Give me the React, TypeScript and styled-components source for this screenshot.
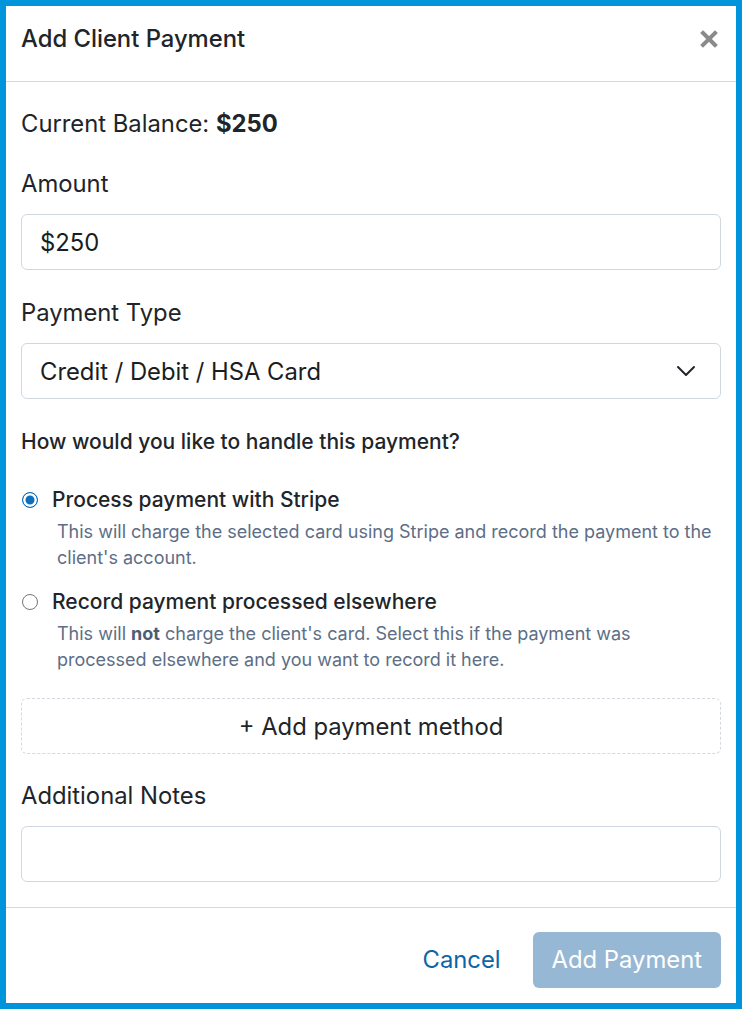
import React, { useState } from "react";
import styled, { createGlobalStyle } from "styled-components";

const GlobalStyle = createGlobalStyle`
  * { box-sizing: border-box; }
  html, body { margin: 0; padding: 0; background: #ffffff; }
  body { font-family: Inter, "Noto Sans", "Liberation Sans", sans-serif; color: #212529; }
`;

const App: React.FC = () => {
  const [mode, setMode] = useState<"stripe" | "elsewhere">("stripe");

  return (
    <>
      <GlobalStyle />
      <Modal>
        <Header>
          <Title>Add Client Payment</Title>
          <CloseButton aria-label="Close">
            <svg width="18" height="18" viewBox="0 0 18 18">
              <path d="M3 3 L15 15 M15 3 L3 15" stroke="#8a8a8a" strokeWidth="4" strokeLinecap="square" />
            </svg>
          </CloseButton>
        </Header>

        <Body>
          <Balance>
            Current Balance: <strong>$250</strong>
          </Balance>

          <Label gap={30}>Amount</Label>
          <Field>
            <FieldText>$250</FieldText>
          </Field>

          <Label gap={28}>Payment Type</Label>
          <Field>
            <FieldText>Credit / Debit / HSA Card</FieldText>
            <svg width="20" height="12" viewBox="0 0 20 12">
              <path d="M2 2 L10 10 L18 2" fill="none" stroke="#212529" strokeWidth="2" strokeLinecap="round" strokeLinejoin="round" />
            </svg>
          </Field>

          <Question>How would you like to handle this payment?</Question>

          <Option gap={32} onClick={() => setMode("stripe")}>
            <OptionRow>
              <Radio checked={mode === "stripe"} />
              <OptionLabel>Process payment with Stripe</OptionLabel>
            </OptionRow>
            <OptionHint>
              This will charge the selected card using Stripe and record the payment to the client's account.
            </OptionHint>
          </Option>

          <Option gap={18} onClick={() => setMode("elsewhere")}>
            <OptionRow>
              <Radio checked={mode === "elsewhere"} />
              <OptionLabel>Record payment processed elsewhere</OptionLabel>
            </OptionRow>
            <OptionHint>
              This will <b>not</b> charge the client's card. Select this if the payment was
              <br />
              processed elsewhere and you want to record it here.
            </OptionHint>
          </Option>

          <AddMethod>+ Add payment method</AddMethod>

          <Label gap={27}>Additional Notes</Label>
          <Field />
        </Body>

        <Footer>
          <CancelButton>Cancel</CancelButton>
          <SubmitButton disabled>Add Payment</SubmitButton>
        </Footer>
      </Modal>
    </>
  );
};

export default App;

const Modal = styled.div`
  display: flex;
  flex-direction: column;
  height: 100vh;
  border: 6px solid #0095da;
  background: #ffffff;
`;

const Header = styled.div`
  display: flex;
  align-items: center;
  justify-content: space-between;
  height: 76px;
  padding: 0 18px 0 15px;
  border-bottom: 1px solid #d3d9e0;
  flex-shrink: 0;
`;

const Title = styled.h1`
  margin: 0 0 10px;
  font-size: 23.8px;
  font-weight: 500;
  color: #212529;
`;

const CloseButton = styled.button`
  display: flex;
  border: none;
  background: none;
  padding: 0;
  margin-top: -9px;
  cursor: pointer;
`;

const Body = styled.div`
  display: flex;
  flex-direction: column;
  padding: 27px 15px 25px;
  border-bottom: 1px solid #d3d9e0;
`;

const Balance = styled.div`
  font-size: 23.8px;
  line-height: 30px;
  strong { font-weight: 700; }
`;

const Label = styled.label<{ gap: number }>`
  margin-top: ${(p) => p.gap}px;
  margin-bottom: 15px;
  font-size: 23.8px;
  line-height: 30px;
  color: #212529;
`;

const Field = styled.div`
  display: flex;
  align-items: center;
  justify-content: space-between;
  height: 56px;
  padding: 0 24px 0 18px;
  border: 1px solid #cfd7e0;
  border-radius: 6px;
  background: #ffffff;
`;

const FieldText = styled.span`
  font-size: 23.8px;
  color: #1a1d21;
`;

const Question = styled.div`
  margin-top: 30px;
  font-size: 21px;
  line-height: 26px;
  font-weight: 500;
  color: #212529;
`;

const Option = styled.div<{ gap: number }>`
  display: flex;
  flex-direction: column;
  margin-top: ${(p) => p.gap}px;
  cursor: pointer;
`;

const OptionRow = styled.div`
  display: flex;
  align-items: center;
  gap: 14px;
  padding-left: 1px;
`;

const Radio = styled.span<{ checked: boolean }>`
  width: 16px;
  height: 16px;
  border-radius: 50%;
  border: 1px solid ${(p) => (p.checked ? "#0d6ebd" : "#767676")};
  background: ${(p) => (p.checked ? "#0d6ebd" : "#ffffff")};
  box-shadow: ${(p) => (p.checked ? "inset 0 0 0 2.5px #ffffff" : "none")};
  flex-shrink: 0;
`;

const OptionLabel = styled.span`
  font-size: 21px;
  line-height: 26px;
  font-weight: 500;
  color: #212529;
`;

const OptionHint = styled.p`
  margin: 6px 0 0 36px;
  font-size: 18px;
  line-height: 26px;
  color: #5d6e86;
  b { font-weight: 700; color: #4d5d73; }
`;

const AddMethod = styled.div`
  display: flex;
  align-items: center;
  justify-content: center;
  height: 56px;
  margin-top: 25px;
  border: 1px dashed #d3d9e0;
  border-radius: 6px;
  font-size: 23.8px;
  color: #212529;
  cursor: pointer;
`;

const Footer = styled.div`
  display: flex;
  align-items: center;
  justify-content: flex-end;
  gap: 32px;
  flex: 1;
  padding: 8px 15px 0;
`;

const CancelButton = styled.button`
  border: none;
  background: none;
  padding: 0;
  font-family: inherit;
  font-size: 23.8px;
  color: #0b66a8;
  cursor: pointer;
`;

const SubmitButton = styled.button`
  height: 56px;
  padding: 0 19px;
  border: none;
  border-radius: 6px;
  background: #97b8d4;
  font-family: inherit;
  font-size: 23.8px;
  color: #ffffff;
  cursor: default;
`;
